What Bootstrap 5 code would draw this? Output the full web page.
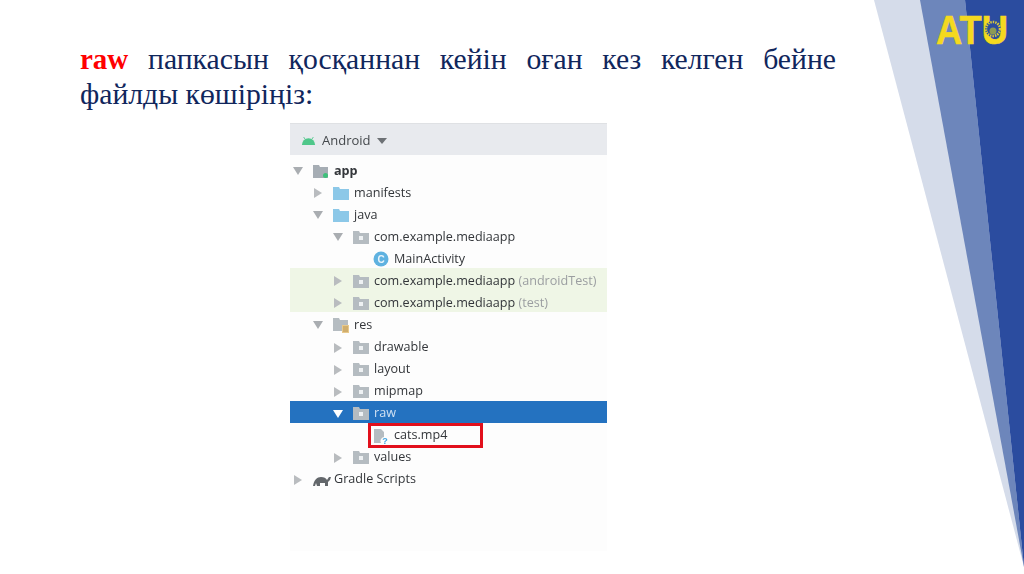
<!DOCTYPE html>
<html lang="kk">
<head>
<meta charset="utf-8">
<title>raw</title>
<link href="https://cdn.jsdelivr.net/npm/bootstrap@5.3.0/dist/css/bootstrap.min.css" rel="stylesheet">
<style>
html,body{height:574px;overflow:hidden;background:#fff}
.slide-page{width:1024px;height:574px;position:relative;overflow:hidden}
.deco{position:absolute;left:0;top:0;width:1024px;height:574px}
.slide-main{position:relative;padding:42px 188px 0 80px}
.slide-text{font-family:"Liberation Serif",serif;font-size:29.7px;line-height:35px;color:#10265c;text-align:justify;margin:0}
.slide-text b{color:#f00;font-size:29px}
.tree-wrap{margin:11px 0 0 210px;width:317px;height:428px;background:#fdfdfd;font-family:"Open Sans",sans-serif;font-size:12.6px;color:#33363a;filter:blur(.4px)}
.tree-head{height:32px;background:#e8eaee;border-top:1px solid #dfe1e4;padding:2px 0 0 11px;gap:6px;font-size:13px;color:#44484c}
.tree-list{padding-top:3px}
.tree-row{height:22.07px;white-space:nowrap;padding-top:4px}
.lv0{padding-left:3px}.lv1{padding-left:23px}.lv2{padding-left:43px}.lv3{padding-left:63px}
.tw{width:20px;flex:none;display:flex;align-items:center}
.ic{width:21px;flex:none;display:flex;align-items:center}
.row-green{background:#eff6e6}
.row-sel{background:#2472c0;color:#cfe0f2}
.faint{color:#9b9ea1}
.boxed{position:absolute;left:78px;top:0;width:115px;height:25px;border:3px solid #e2101c}
.logo-word{font-family:"Liberation Sans",sans-serif;font-weight:700;font-size:40px}
</style>
</head>
<body>
<svg width="0" height="0" class="d-block position-absolute">
<defs>
<symbol id="open" viewBox="0 0 10 10"><path d="M0 1h10L5 9z" fill="#a9adb1"/></symbol>
<symbol id="shut" viewBox="0 0 10 10"><path d="M1 0v10l8-5z" fill="#b9bcbf"/></symbol>
<symbol id="pkg" viewBox="0 0 16 13"><path d="M0 0h6l1 2h9v11H0z" fill="#b5bcc1"/><rect x="6" y="5" width="4" height="4" fill="#eef1f3"/></symbol>
<symbol id="blue" viewBox="0 0 16 13"><path d="M0 0h6l1 2h9v11H0z" fill="#8cc8e8"/></symbol>
<symbol id="res" viewBox="0 0 16 15"><path d="M0 0h6l1 2h8v11H0z" fill="#b5bcc1"/><rect x="9" y="7" width="7" height="8" fill="#e8c98c"/><path d="M10 9h5M10 11h5M10 13h5" stroke="#b8924e"/></symbol>
</defs>
</svg>
<div class="slide-page">
<svg class="deco" viewBox="0 0 1024 574" aria-hidden="true">
<polygon points="874,0 965,0 1024,567" fill="#d5dcea"/>
<polygon points="920,0 965,0 1024,567" fill="#6d86bb"/>
<polygon points="965,0 1024,0 1024,567" fill="#2b4c9f"/>
<text x="936" y="44" class="logo-word" fill="#f5d91f" stroke="#f5d91f" stroke-width=".6" textLength="72" lengthAdjust="spacingAndGlyphs">ATU</text>
<circle cx="993" cy="29" r="8" fill="#2b4c9f"/>
<circle cx="993" cy="29" r="7" fill="none" stroke="#d8c93a" stroke-width="2.500" stroke-dasharray="1.500 1"/>
<circle cx="993" cy="31" r="3.500" fill="#8c9a55"/>
</svg>
<div class="slide-main">
<p class="slide-text"><b>raw</b> папкасын қосқаннан кейін оған кез келген бейне файлды көшіріңіз:</p>
<div class="tree-wrap">
<div class="tree-head d-flex align-items-center">
<svg width="15" height="10" viewBox="0 0 17 11"><path d="M1 10a7.500 7.500 0 0 1 15 0z" fill="#4fc78a"/><path d="M3 1l2 3M14 1l-2 3" stroke="#4fc78a"/></svg>
<span>Android</span>
<svg width="10" height="6" viewBox="0 0 10 6"><path d="M0 0h10L5 6z" fill="#6d7175"/></svg>
</div>
<div class="tree-list">
<div class="tree-row lv0 d-flex align-items-center"><span class="tw"><svg width="10" height="10"><use href="#open"/></svg></span><span class="ic"><svg width="16" height="13" viewBox="0 0 16 13"><path d="M0 0h6l1 2h8v11H0z" fill="#a6adb4"/><rect x="10" y="8" width="5" height="5" rx="2.500" fill="#3ec07a"/></svg></span><b>app</b></div>
<div class="tree-row lv1 d-flex align-items-center"><span class="tw"><svg width="10" height="10"><use href="#shut"/></svg></span><span class="ic"><svg width="16" height="13"><use href="#blue"/></svg></span>manifests</div>
<div class="tree-row lv1 d-flex align-items-center"><span class="tw"><svg width="10" height="10"><use href="#open"/></svg></span><span class="ic"><svg width="16" height="13"><use href="#blue"/></svg></span>java</div>
<div class="tree-row lv2 d-flex align-items-center"><span class="tw"><svg width="10" height="10"><use href="#open"/></svg></span><span class="ic"><svg width="16" height="13"><use href="#pkg"/></svg></span>com.example.mediaapp</div>
<div class="tree-row lv3 d-flex align-items-center"><span class="tw"></span><span class="ic"><svg width="16" height="16" viewBox="0 0 16 16"><circle cx="8" cy="8" r="7.500" fill="#5fb2e0"/><text x="8" y="11.500" text-anchor="middle" font-size="10" font-weight="700" fill="#e9f4fb" font-family="Liberation Sans">C</text></svg></span>MainActivity</div>
<div class="tree-row lv2 row-green d-flex align-items-center"><span class="tw"><svg width="10" height="10"><use href="#shut"/></svg></span><span class="ic"><svg width="16" height="13"><use href="#pkg"/></svg></span>com.example.mediaapp&nbsp;<span class="faint">(androidTest)</span></div>
<div class="tree-row lv2 row-green d-flex align-items-center"><span class="tw"><svg width="10" height="10"><use href="#shut"/></svg></span><span class="ic"><svg width="16" height="13"><use href="#pkg"/></svg></span>com.example.mediaapp&nbsp;<span class="faint">(test)</span></div>
<div class="tree-row lv1 d-flex align-items-center"><span class="tw"><svg width="10" height="10"><use href="#open"/></svg></span><span class="ic"><svg width="16" height="15"><use href="#res"/></svg></span>res</div>
<div class="tree-row lv2 d-flex align-items-center"><span class="tw"><svg width="10" height="10"><use href="#shut"/></svg></span><span class="ic"><svg width="16" height="13"><use href="#pkg"/></svg></span>drawable</div>
<div class="tree-row lv2 d-flex align-items-center"><span class="tw"><svg width="10" height="10"><use href="#shut"/></svg></span><span class="ic"><svg width="16" height="13"><use href="#pkg"/></svg></span>layout</div>
<div class="tree-row lv2 d-flex align-items-center"><span class="tw"><svg width="10" height="10"><use href="#shut"/></svg></span><span class="ic"><svg width="16" height="13"><use href="#pkg"/></svg></span>mipmap</div>
<div class="tree-row lv2 row-sel d-flex align-items-center"><span class="tw"><svg width="10" height="10" viewBox="0 0 10 10"><path d="M0 1h10L5 9z" fill="#fff"/></svg></span><span class="ic"><svg width="16" height="13"><use href="#pkg"/></svg></span>raw</div>
<div class="tree-row lv3 position-relative d-flex align-items-center"><span class="tw"></span><span class="ic"><svg width="16" height="16" viewBox="0 0 16 16"><path d="M1 1h7l3 3v5a4 4 0 0 0-3 6H1z" fill="#b5bcc1"/><text x="12" y="15.500" text-anchor="middle" font-size="9" font-weight="700" fill="#45a5e0" font-family="Liberation Sans">?</text></svg></span>cats.mp4<span class="boxed"></span></div>
<div class="tree-row lv2 d-flex align-items-center"><span class="tw"><svg width="10" height="10"><use href="#shut"/></svg></span><span class="ic"><svg width="16" height="13"><use href="#pkg"/></svg></span>values</div>
<div class="tree-row lv0 d-flex align-items-center"><span class="tw"><svg width="10" height="10"><use href="#shut"/></svg></span><span class="ic"><svg width="18" height="12" viewBox="0 0 18 12"><path d="M0 12c1-6 4-9 8-9 3 0 5 1 6 3l2-3h2l-1 3-2 2v4h-3V9H7v3H4l-1-3-1 3z" fill="#63676b"/></svg></span>Gradle Scripts</div>
</div>
</div>
</div>
</div>
<script src="https://cdn.jsdelivr.net/npm/bootstrap@5.3.0/dist/js/bootstrap.bundle.min.js"></script>
</body>
</html>
